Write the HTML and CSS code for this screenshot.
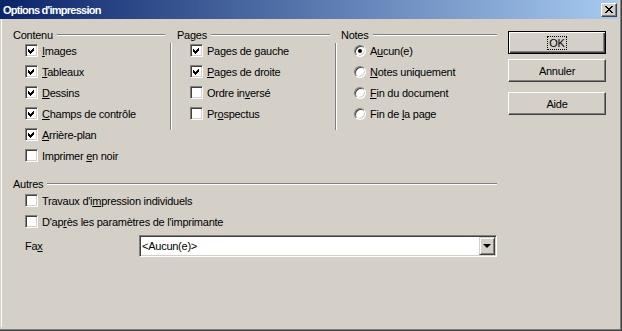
FILE: index.html
```html
<!DOCTYPE html>
<html lang="fr">
<head>
  <meta charset="UTF-8">
  <title>Options d'impression</title>
  <link rel="stylesheet" href="styles.css">
</head>
<body>
  <div class="window">
    <div class="titlebar">
      <span class="title">Options d'impression</span>
      <span class="close-btn">
        <svg width="8" height="7" viewBox="0 0 8 7"><path d="M0 0h2v1H0zM6 0h2v1H6zM1 1h2v1H1zM5 1h2v1H5zM2 2h4v1H2zM3 3h2v1H3zM2 4h4v1H2zM1 5h2v1H1zM5 5h2v1H5zM0 6h2v1H0zM6 6h2v1H6z" fill="#000"/></svg>
      </span>
    </div>

    <div class="content">
      <div class="main">
        <div class="columns">
          <!-- Contenu -->
          <section class="group group-first">
            <div class="heading"><span>Contenu</span><span class="rule"></span></div>
            <div class="group-body">
              <div class="row"><span class="check"><svg viewBox="0 0 9 9"><polygon points="1,3 3,5 7,1 7,4 3,8 1,6"/></svg></span><span><u>I</u>mages</span></div>
              <div class="row"><span class="check"><svg viewBox="0 0 9 9"><polygon points="1,3 3,5 7,1 7,4 3,8 1,6"/></svg></span><span><u>T</u>ableaux</span></div>
              <div class="row"><span class="check"><svg viewBox="0 0 9 9"><polygon points="1,3 3,5 7,1 7,4 3,8 1,6"/></svg></span><span><u>D</u>essins</span></div>
              <div class="row"><span class="check"><svg viewBox="0 0 9 9"><polygon points="1,3 3,5 7,1 7,4 3,8 1,6"/></svg></span><span><u>C</u>hamps de contrôle</span></div>
              <div class="row"><span class="check"><svg viewBox="0 0 9 9"><polygon points="1,3 3,5 7,1 7,4 3,8 1,6"/></svg></span><span><u>A</u>rrière-plan</span></div>
              <div class="row"><span class="check"></span><span>Imprimer <u>e</u>n noir</span></div>
            </div>
          </section>

          <!-- Pages -->
          <section class="group group-mid">
            <div class="heading"><span>Pages</span><span class="rule"></span></div>
            <div class="group-body">
              <div class="row"><span class="check"><svg viewBox="0 0 9 9"><polygon points="1,3 3,5 7,1 7,4 3,8 1,6"/></svg></span><span>Pages de <u>g</u>auche</span></div>
              <div class="row"><span class="check"><svg viewBox="0 0 9 9"><polygon points="1,3 3,5 7,1 7,4 3,8 1,6"/></svg></span><span><u>P</u>ages de droite</span></div>
              <div class="row"><span class="check"></span><span>Ordre in<u>v</u>ersé</span></div>
              <div class="row"><span class="check"></span><span>Pr<u>o</u>spectus</span></div>
            </div>
          </section>

          <!-- Notes -->
          <section class="group group-last">
            <div class="heading"><span>Notes</span><span class="rule"></span></div>
            <div class="group-body">
              <div class="row"><span class="radio selected"></span><span>A<u>u</u>cun(e)</span></div>
              <div class="row"><span class="radio"></span><span><u>N</u>otes uniquement</span></div>
              <div class="row"><span class="radio"></span><span><u>F</u>in du document</span></div>
              <div class="row"><span class="radio"></span><span>Fin de <u>l</u>a page</span></div>
            </div>
          </section>
        </div>

        <!-- Autres -->
        <section class="autres">
          <div class="heading"><span>Autres</span><span class="rule"></span></div>
          <div class="autres-body">
            <div class="row"><span class="check"></span><span>Travaux d'i<u>m</u>pression individuels</span></div>
            <div class="row"><span class="check"></span><span>D'ap<u>r</u>ès les paramètres de l'imprimante</span></div>
            <div class="fax-row">
              <span class="fax-label">Fa<u>x</u></span>
              <div class="combo">
                <span class="combo-text">&lt;Aucun(e)&gt;</span>
                <span class="combo-btn"><span class="arrow"></span></span>
              </div>
            </div>
          </div>
        </section>
      </div>

      <div class="buttons">
        <div class="btn btn-default"><span class="focus">OK</span></div>
        <div class="btn">Annuler</div>
        <div class="btn btn-help">Aide</div>
      </div>
    </div>
  </div>
</body>
</html>
```

FILE: styles.css
```css
/* Classic Windows dialog */
html, body {
  margin: 0;
  padding: 0;
  background: #d4d0c8;
}

body {
  font-family: "Liberation Sans", Arial, sans-serif;
  font-size: 11px;
  letter-spacing: -0.25px;
  color: #000;
}

.window {
  width: 622px;
  height: 331px;
  box-sizing: border-box;
  border-right: 1px solid #404040;
  border-bottom: 1px solid #404040;
  box-shadow: inset -1px -1px #808080;
  padding: 0 3px 3px 0;
  display: flex;
  flex-direction: column;
}

/* Title bar */
.titlebar {
  height: 19px;
  flex: none;
  display: flex;
  align-items: center;
  justify-content: space-between;
  padding: 0 1px 0 3px;
  background: linear-gradient(to right, #0a246a, #a6caf0);
}

.title {
  color: #fff;
  font-weight: bold;
  font-size: 11px;
  letter-spacing: -0.75px;
}

.close-btn {
  width: 16px;
  height: 14px;
  box-sizing: border-box;
  display: flex;
  align-items: center;
  justify-content: center;
  background: #d4d0c8;
  border: 1px solid;
  border-color: #fff #404040 #404040 #fff;
  box-shadow: inset -1px -1px #808080;
}

.close-btn svg {
  display: block;
}

/* Body */
.content {
  flex: 1;
  display: flex;
  margin-left: 1px;
  border-left: 1px solid #fff;
  padding: 9px 0 0 11px;
}

.main {
  width: 484px;
}

.columns {
  display: grid;
  grid-template-columns: 157px 165px 162px;
}

.heading {
  display: flex;
  align-items: center;
  gap: 4px;
  height: 13px;
}

.rule {
  flex: 1;
  height: 0;
  border-top: 1px solid #808080;
  border-bottom: 1px solid #fff;
}

.group-first .heading { padding-right: 5px; }
.group-mid .heading { padding: 0 5px 0 7px; }
.group-last .heading { padding-left: 6px; }

.group-body {
  display: flex;
  flex-direction: column;
  margin-top: 2px;
  padding: 0 0 6px 12px;
}

.group-body .row:first-child {
  margin-top: -3px;
}

.group-mid .group-body,
.group-last .group-body {
  border-left: 1px solid #808080;
  box-shadow: inset 1px 0 #fff;
}

.group-mid .group-body { padding-left: 19px; }
.group-last .group-body { padding-left: 18px; }

.row {
  display: flex;
  align-items: center;
  gap: 4px;
  height: 21px;
  white-space: nowrap;
}

/* Checkbox */
.check {
  width: 13px;
  height: 13px;
  box-sizing: border-box;
  flex: none;
  background: #fff;
  border: 1px solid;
  border-color: #808080 #fff #fff #808080;
  box-shadow: inset 1px 1px #404040, inset -1px -1px #d4d0c8;
  padding: 1px;
}

.check svg {
  display: block;
  width: 9px;
  height: 9px;
  fill: #000;
  shape-rendering: crispEdges;
}

/* Radio */
.radio {
  width: 12px;
  height: 12px;
  box-sizing: border-box;
  flex: none;
  border-radius: 50%;
  background: #fff;
  border: 1px solid;
  border-color: #808080 #fff #fff #808080;
  box-shadow: inset 1px 1px #404040, inset -1px -1px #d4d0c8;
  display: flex;
  align-items: center;
  justify-content: center;
}

.radio.selected::after {
  content: "";
  width: 4px;
  height: 4px;
  border-radius: 50%;
  background: #000;
}

/* Autres */
.autres {
  margin-top: 5px;
}

.autres-body {
  padding-left: 12px;
}

.fax-row {
  display: flex;
  align-items: center;
  margin-top: 3px;
}

.fax-label {
  width: 114px;
}

.combo {
  width: 358px;
  height: 22px;
  box-sizing: border-box;
  display: flex;
  align-items: center;
  justify-content: space-between;
  background: #fff;
  border: 1px solid;
  border-color: #808080 #fff #fff #808080;
  box-shadow: inset 1px 1px #404040, inset -1px -1px #d4d0c8;
  padding: 1px 1px 1px 2px;
}

.combo-btn {
  width: 16px;
  height: 18px;
  box-sizing: border-box;
  background: #d4d0c8;
  border: 1px solid;
  border-color: #d4d0c8 #404040 #404040 #d4d0c8;
  box-shadow: inset 1px 1px #fff, inset -1px -1px #808080;
  display: flex;
  align-items: center;
  justify-content: center;
}

.arrow {
  width: 0;
  height: 0;
  border-left: 4px solid transparent;
  border-right: 4px solid transparent;
  border-top: 4px solid #000;
}

/* Buttons */
.buttons {
  width: 98px;
  margin-left: 11px;
  padding-top: 3px;
  display: flex;
  flex-direction: column;
}

.btn {
  height: 23px;
  box-sizing: border-box;
  display: flex;
  align-items: center;
  justify-content: center;
  border: 1px solid;
  border-color: #fff #404040 #404040 #fff;
  box-shadow: inset -1px -1px #808080;
  margin-bottom: 5px;
}

.btn-default {
  border: 1px solid #000;
  box-shadow: inset 1px 1px #fff, inset -1px -1px #404040, inset -2px -2px #808080;
}

.btn-help {
  margin-top: 5px;
}

.focus {
  outline: 1px dotted #000;
  padding: 0 1px;
}
```
